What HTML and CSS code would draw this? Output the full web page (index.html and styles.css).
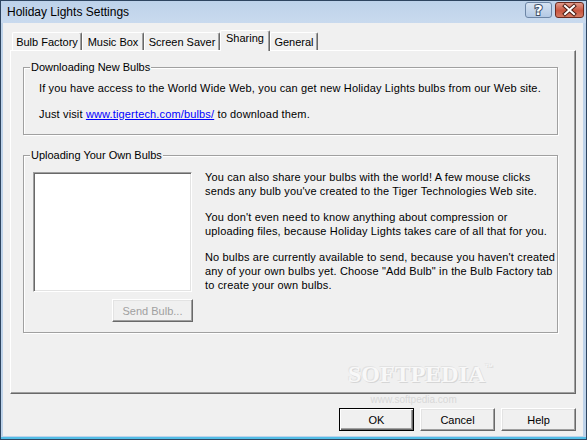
FILE: index.html
```html
<!DOCTYPE html>
<html lang="en">
<head>
  <meta charset="UTF-8" />
  <title>Holiday Lights Settings</title>
  <link rel="stylesheet" href="styles.css">
</head>
<body>

<div class="window">
  <div class="titlebar">
    <span class="title">Holiday Lights Settings</span>
    <div class="caption-buttons">
      <div class="cap-btn help">
        <svg width="27" height="16" viewBox="0 0 27 16">
          <text x="13.5" y="13" text-anchor="middle" class="q">?</text>
        </svg>
      </div>
      <div class="cap-btn close">
        <svg width="29" height="16" viewBox="0 0 29 16">
          <path d="M10 4 L19 12 M19 4 L10 12" stroke="#4a1d14" stroke-width="4" stroke-linecap="square" />
          <path d="M10 4 L19 12 M19 4 L10 12" stroke="#fff" stroke-width="2" stroke-linecap="square" />
        </svg>
      </div>
    </div>
  </div>

  <div class="client">
    <div class="tabs">
      <div class="tab t1">Bulb Factory</div>
      <div class="tab t2">Music Box</div>
      <div class="tab t3">Screen Saver</div>
      <div class="tab t4 active">Sharing</div>
      <div class="tab t5">General</div>
    </div>

    <div class="panel">
      <fieldset class="group download">
        <legend>Downloading New Bulbs</legend>
        <p>If you have access to the World Wide Web, you can get new Holiday Lights bulbs from our Web site.</p>
        <p>Just visit <a href="#">www.tigertech.com/bulbs/</a> to download them.</p>
      </fieldset>

      <fieldset class="group upload">
        <legend>Uploading Your Own Bulbs</legend>
        <div class="upload-row">
          <div class="upload-left">
            <div class="listbox"></div>
            <button class="btn disabled send">Send Bulb...</button>
          </div>
          <div class="upload-text">
            <p>You can also share your bulbs with the world! A few mouse clicks<br>sends any bulb you've created to the Tiger Technologies Web site.</p>
            <p>You don't even need to know anything about compression or<br>uploading files, because Holiday Lights takes care of all that for you.</p>
            <p>No bulbs are currently available to send, because you haven't created<br>any of your own bulbs yet. Choose "Add Bulb" in the Bulb Factory tab<br>to create your own bulbs.</p>
          </div>
        </div>
      </fieldset>
    </div>

    <div class="dialog-buttons">
      <button class="btn default">OK</button>
      <button class="btn">Cancel</button>
      <button class="btn">Help</button>
    </div>

    <div class="watermark">
      <div class="wm-big">SOFTPEDIA<sup>™</sup></div>
      <div class="wm-small">www.softpedia.com</div>
    </div>
  </div>
</div>

</body>
</html>
```

FILE: styles.css
```css
body {
  margin: 0;
  font-family: "Liberation Sans", Arial, sans-serif;
  font-size: 11px;
  color: #000;
  background: #fff;
}
.window {
  width: 587px;
  height: 440px;
  box-sizing: border-box;
  border: 1px solid #2e4560;
  background: #bed3ea;
  padding: 0 3px 3px 2px;
  display: flex;
  flex-direction: column;
  box-shadow: inset 0 -2px 0 #52bde6;
}
.titlebar {
  height: 22px;
  margin: 0 -3px 0 -2px;
  padding: 0 2px 0 6px;
  display: flex;
  align-items: center;
  justify-content: space-between;
  background: linear-gradient(#bdd2ea, #c9daee);
}
.title {
  font-size: 12px;
  margin-top: -1px;
}
.caption-buttons {
  display: flex;
  gap: 3px;
  margin-top: -4px;
}
.cap-btn {
  height: 16px;
  border-radius: 3px;
  box-sizing: border-box;
}
.cap-btn svg {
  display: block;
  margin: -1px;
}
.help {
  width: 27px;
  border: 1px solid #6d86a6;
  background: linear-gradient(#d6e3f2, #b3c9e4);
}
.close {
  width: 29px;
  border: 1px solid #6b2a1e;
  background: linear-gradient(#e09a8a, #c8553f 55%, #d47a62);
}
.q {
  font-family: "DejaVu Sans", sans-serif;
  font-weight: bold;
  font-size: 14px;
  fill: #fff;
  stroke: #3c4f68;
  stroke-width: 2;
  paint-order: stroke;
}
.client {
  flex: 1;
  background: #f0f0f0;
  position: relative;
  display: flex;
  flex-direction: column;
  padding: 0 7px;
}
.tabs {
  display: flex;
  align-items: flex-end;
  margin-top: 7px;
  padding-left: 2px;
  height: 20px;
  position: relative;
  z-index: 1;
}
.tab {
  height: 18px;
  box-sizing: border-box;
  border-top: 1px solid #fff;
  border-left: 1px solid #fff;
  border-right: 1px solid #696969;
  box-shadow: inset -1px 0 0 #a0a0a0;
  border-radius: 2px 2px 0 0;
  background: #f0f0f0;
  text-align: center;
  line-height: 16px;
  padding-top: 1px;
}
.t1 { width: 70px; }
.t2 { width: 62px; }
.t3 { width: 76px; }
.t4 { width: 50px; }
.t5 { width: 48px; }
.tab.active {
  height: 21px;
  margin-bottom: -1px;
  line-height: 15px;
  padding-top: 0;
}
.panel {
  height: 344px;
  box-sizing: border-box;
  border: 1px solid;
  border-color: #fff #696969 #696969 #fff;
  box-shadow: inset -1px -1px 0 #a0a0a0;
  display: flex;
  flex-direction: column;
  padding-left: 12px;
}
.group {
  width: 535px;
  box-sizing: border-box;
  margin: 0;
  padding: 0;
  min-inline-size: 0;
  border: 1px solid #a0a0a0;
  box-shadow: inset 1px 1px 0 #fff, 1px 1px 0 #fff;
}
.group legend {
  padding: 0 1px;
  line-height: 13px;
  background: #f0f0f0;
}
.group p {
  margin: 0;
  line-height: 13px;
  letter-spacing: 0.15px;
}
.download {
  margin-top: 10px;
  padding: 8px 0 13px 15px;
}
.download legend {
  margin-left: -9px;
}
.download p + p {
  margin-top: 13px;
}
a {
  color: #0000ff;
}
.upload {
  margin-top: 14px;
  padding: 8px 0 10px 9px;
}
.upload legend {
  margin-left: -3px;
}
.upload-row {
  display: flex;
  align-items: flex-start;
}
.upload-left {
  width: 159px;
  display: flex;
  flex-direction: column;
  margin-top: 2px;
}
.listbox {
  height: 120px;
  box-sizing: border-box;
  background: #fff;
  border: 1px solid;
  border-color: #a0a0a0 #fff #fff #a0a0a0;
  box-shadow: inset 1px 1px 0 #696969, inset -1px -1px 0 #e3e3e3;
}
.upload-text {
  margin-left: 13px;
}
.upload-text p {
  line-height: 14px;
  margin: 0 0 12px;
}
.btn {
  width: 75px;
  height: 23px;
  box-sizing: border-box;
  font-family: inherit;
  font-size: 11px;
  color: #000;
  background: #f0f0f0;
  border: 1px solid;
  border-color: #fff #696969 #696969 #fff;
  box-shadow: inset -1px -1px 0 #a0a0a0, inset 1px 1px 0 #e3e3e3;
  padding: 0;
}
.send {
  width: 81px;
  align-self: flex-end;
  margin-top: 7px;
  margin-right: -1px;
}
.btn.disabled {
  color: #a0a0a0;
}
.btn.default {
  border: 1px solid #000;
  box-shadow: inset 1px 1px 0 #fff, inset -1px -1px 0 #696969, inset -2px -2px 0 #a0a0a0;
}
.dialog-buttons {
  display: flex;
  justify-content: flex-end;
  gap: 6px;
  margin-top: 14px;
}
.watermark {
  position: absolute;
  left: 345px;
  top: 338px;
  text-align: center;
  pointer-events: none;
}
.wm-big {
  font-family: "Liberation Serif", serif;
  font-weight: bold;
  font-size: 24px;
  color: #f8f8f8;
  text-shadow: 1px 1px 0 #d6d6d6, -1px -1px 0 #e2e2e2;
}
.wm-big sup {
  font-size: 8px;
  font-family: "Liberation Sans", sans-serif;
  vertical-align: 12px;
}
.wm-small {
  font-size: 10px;
  color: #d8d8d8;
  margin-top: 6px;
  margin-left: -14px;
}
```
